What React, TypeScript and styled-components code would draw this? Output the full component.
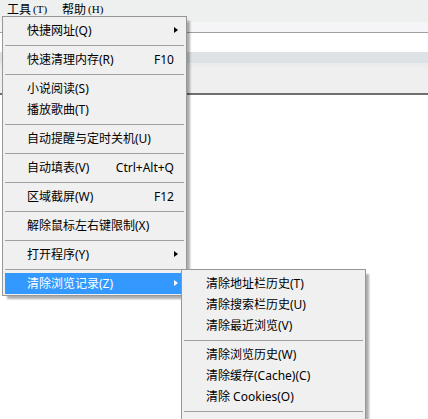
import React from "react";
import styled, { createGlobalStyle } from "styled-components";

const GlobalStyle = createGlobalStyle`
  html, body { margin: 0; padding: 0; background: #ffffff; }
  body { font-family: "Noto Sans", "Noto Sans CJK SC", sans-serif; }
  * { box-sizing: border-box; }
`;

const Page = styled.div`
  position: relative;
  width: 428px;
  height: 419px;
  overflow: hidden;
  background: #ffffff;
  display: flex;
  flex-direction: column;
`;

const MenuBar = styled.div`
  height: 22px;
  background: #eeefef;
  display: flex;
  align-items: flex-start;
  flex-shrink: 0;
`;

const MenuBarItem = styled.div`
  padding: 0 8px 0 7px;
  height: 18px;
  display: flex;
  align-items: center;
  gap: 2px;
  color: #000;
`;

const BarLabel = styled.span`
  font-family: "Noto Sans CJK SC", sans-serif;
  font-size: 12px;
  line-height: 18px;
`;

const BarKey = styled.span`
  font-family: "Liberation Serif", "Noto Sans CJK SC", serif;
  font-size: 11px;
  line-height: 18px;
`;

const Band = styled.div<{ $h: number; $bg: string; $line?: string; $lineW?: number }>`
  height: ${(p) => p.$h}px;
  background: ${(p) => p.$bg};
  flex-shrink: 0;
  border-bottom: ${(p) => (p.$line ? `${p.$lineW ?? 1}px solid ${p.$line}` : "none")};
`;

const Menu = styled.div<{ $left: number; $top: number; $z: number; $h?: number }>`
  position: absolute;
  left: ${(p) => p.$left}px;
  top: ${(p) => p.$top}px;
  width: 185px;
  ${(p) => (p.$h ? `height: ${p.$h}px;` : "")}
  z-index: ${(p) => p.$z};
  background: #f0f0f0;
  border: 1px solid #979797;
  padding: 3px 2px 1px 2px;
  box-shadow: 4px 4px 2px -1px rgba(0, 0, 0, 0.32);
  display: flex;
  flex-direction: column;
`;

const Item = styled.div<{ $active?: boolean }>`
  height: 21px;
  display: flex;
  align-items: center;
  padding: 0 6px 0 22px;
  font-size: 12px;
  line-height: 21px;
  color: ${(p) => (p.$active ? "#ffffff" : "#000000")};
  background: ${(p) => (p.$active ? "#3399ff" : "transparent")};
  white-space: nowrap;
`;

const Label = styled.span`
  flex: 1;
`;

const Shortcut = styled.span`
  margin-right: 4px;
`;

const Arrow = styled.span<{ $active?: boolean }>`
  width: 0;
  height: 0;
  margin-bottom: 2px;
  border-top: 3.5px solid transparent;
  border-bottom: 3.5px solid transparent;
  border-left: 4px solid ${(p) => (p.$active ? "#ffffff" : "#000000")};
`;

const Separator = styled.div`
  height: 8px;
  display: flex;
  align-items: center;
  &::after {
    content: "";
    flex: 1;
    height: 1px;
    background: #a0a0a0;
  }
`;

type Entry =
  | { sep: true }
  | { label: string; shortcut?: string; sub?: boolean; active?: boolean };

const mainItems: Entry[] = [
  { label: "快捷网址(Q)", sub: true },
  { sep: true },
  { label: "快速清理内存(R)", shortcut: "F10" },
  { sep: true },
  { label: "小说阅读(S)" },
  { label: "播放歌曲(T)" },
  { sep: true },
  { label: "自动提醒与定时关机(U)" },
  { sep: true },
  { label: "自动填表(V)", shortcut: "Ctrl+Alt+Q" },
  { sep: true },
  { label: "区域截屏(W)", shortcut: "F12" },
  { sep: true },
  { label: "解除鼠标左右键限制(X)" },
  { sep: true },
  { label: "打开程序(Y)", sub: true },
  { sep: true },
  { label: "清除浏览记录(Z)", sub: true, active: true },
];

const subItems: Entry[] = [
  { label: "清除地址栏历史(T)" },
  { label: "清除搜索栏历史(U)" },
  { label: "清除最近浏览(V)" },
  { sep: true },
  { label: "清除浏览历史(W)" },
  { label: "清除缓存(Cache)(C)" },
  { label: "清除 Cookies(O)" },
  { sep: true },
];

function renderEntries(entries: Entry[]) {
  return entries.map((e, i) => {
    if ("sep" in e) return <Separator key={i} />;
    return (
      <Item key={i} $active={e.active}>
        <Label>{e.label}</Label>
        {e.shortcut && <Shortcut>{e.shortcut}</Shortcut>}
        {e.sub && <Arrow $active={e.active} />}
      </Item>
    );
  });
}

export default function App() {
  return (
    <>
      <GlobalStyle />
      <Page>
        <MenuBar>
          <MenuBarItem>
            <BarLabel>工具</BarLabel>
            <BarKey>(T)</BarKey>
          </MenuBarItem>
          <MenuBarItem>
            <BarLabel>帮助</BarLabel>
            <BarKey>(H)</BarKey>
          </MenuBarItem>
        </MenuBar>
        <Band $h={11} $bg="#f5f5f7" $line="#a0a0a0" />
        <Band $h={19} $bg="#ffffff" />
        <Band $h={11} $bg="#dde2e6" />
        <Band $h={4} $bg="#e9ebec" />
        <Band $h={28} $bg="#efefef" $line="#6f6f6f" $lineW={2} />
        <Menu $left={2} $top={16} $z={2}>
          {renderEntries(mainItems)}
        </Menu>
        <Menu $left={181} $top={269} $z={3} $h={180}>
          {renderEntries(subItems)}
        </Menu>
      </Page>
    </>
  );
}
